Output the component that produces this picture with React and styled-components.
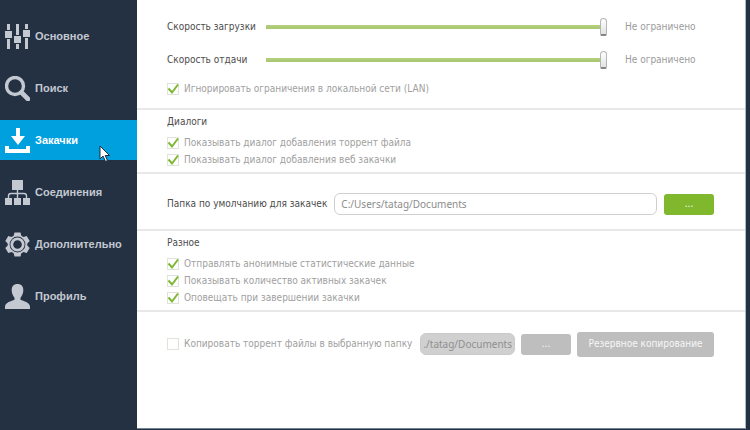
import React, { useState } from "react";
import styled, { createGlobalStyle } from "styled-components";

const GlobalStyle = createGlobalStyle`
  *, *::before, *::after { box-sizing: border-box; }
  body {
    margin: 0;
    background: #243142;
    font-family: "DejaVu Sans Condensed", "Noto Sans", sans-serif;
    font-size: 10px;
    line-height: 16px;
  }
  button, input { font: inherit; margin: 0; }
`;

const Window = styled.div`
  position: relative;
  display: flex;
  min-height: 100vh;
  padding: 0 4px 1px 0;
`;

const Sidebar = styled.nav`
  flex: 0 0 137px;
  display: flex;
  flex-direction: column;
  gap: 12px;
  padding-top: 16px;
`;

const NavItem = styled.a`
  display: flex;
  align-items: center;
  gap: 5px;
  height: 40px;
  padding-left: 5px;
  font-family: "Liberation Sans", sans-serif;
  font-size: 11px;
  font-weight: 700;
  text-decoration: none;
  color: ${(p) => (p.$active ? "#ffffff" : "#c3c8d1")};
  background: ${(p) => (p.$active ? "#009fde" : "transparent")};

  svg { flex: none; fill: currentColor; }
`;

const Main = styled.main`
  flex: 1;
  min-width: 0;
  background: #ffffff;
  border-right: 1px solid #a9bccb;
  border-bottom: 1px solid #6f8494;
`;

const Section = styled.section`
  padding: ${(p) => p.$pad} 31px ${(p) => p.$padEnd} 30px;
  color: #4c4c4c;

  & + & { border-top: 2px solid #e8e8e9; }
`;

const SectionTitle = styled.h2`
  margin: 0 0 4px;
  font-size: inherit;
  font-weight: 400;
`;

const SpeedRows = styled.div`
  margin-bottom: 4px;
`;

const SliderRow = styled.div`
  display: grid;
  grid-template-columns: 99px 1fr 107px;
  align-items: center;
  height: 33px;
`;

const Slider = styled.input`
  appearance: none;
  width: 100%;
  height: 20px;
  background: linear-gradient(#b4d07f, #a9c76f) center / 100% 4px no-repeat;

  &::-webkit-slider-thumb {
    appearance: none;
    width: 7px;
    height: 18px;
    border: 1px solid #b5b5b5;
    border-bottom: 2px solid #858585;
    border-radius: 4px 4px 2px 2px;
    background: linear-gradient(#ffffff, #e2e2e2);
  }
`;

const SliderValue = styled.output`
  padding-left: 18px;
  color: #9b9b9b;
  white-space: nowrap;
`;

const CheckLabel = styled.label`
  display: flex;
  align-items: center;
  gap: 5px;
  height: 17px;
  color: #a0a0a0;
  white-space: nowrap;
`;

const CheckMark = styled.span`
  display: grid;
  flex: none;

  input, svg { grid-area: 1 / 1; }
  input {
    appearance: none;
    width: 12px;
    height: 12px;
    border: 1px solid #dfe3d8;
    background: #ffffff;
  }
  svg { pointer-events: none; visibility: hidden; }
  input:checked + svg { visibility: visible; }
`;

const FieldRow = styled.div`
  display: flex;
  align-items: center;
  gap: ${(p) => (p.$tight ? "6px" : "7px")};
  height: 26px;
`;

const FieldLabel = styled.label`
  white-space: nowrap;
`;

const PathInput = styled.input`
  flex: ${(p) => (p.$compact ? "0 0 95px" : "0 1 324px")};
  min-width: 0;
  height: 22px;
  margin-left: auto;
  padding: 0 ${(p) => (p.$compact ? "2px" : "6px")};
  border: 1px solid #cfcfcf;
  border-radius: 6px;
  background: #ffffff;
  color: #8c8c8c;
  font-family: "Noto Sans", sans-serif;
  text-align: ${(p) => (p.$compact ? "right" : "left")};

  &:disabled { background: #d0d0d0; color: #8f8f8f; border-color: #cacaca; }
`;

const Button = styled.button`
  flex: 0 0 ${(p) => (p.$wide ? "137px" : "50px")};
  height: ${(p) => (p.$wide ? "25px" : "21px")};
  padding: 0;
  border: 0;
  border-radius: 3px;
  background: #7fb82c;
  color: #ffffff;
  white-space: nowrap;

  &:disabled { background: #bebebe; color: #f6f6f6; }
`;

const Pointer = styled.svg`
  position: absolute;
  left: 99px;
  top: 145px;
  pointer-events: none;
`;

const icons = {
  mixer: (
    <>
      <path d="M2 0h3v6H2zM2 15h3v10H2zM11 0h3v11h-3zM11 20h3v5h-3zM20 0h3v5h-3zM20 14h3v11h-3z" />
      <path d="M0 7h7v7H0zM9 12h7v7H9zM18 6h7v7h-7z" />
    </>
  ),
  search: (
    <g fill="none" stroke="currentColor">
      <circle cx="10" cy="10" r="8.500" strokeWidth="3.400" />
      <path d="M16.500 16.500 23 23" strokeWidth="4.600" strokeLinecap="round" />
    </g>
  ),
  download: (
    <path d="M11 0h4v8h5l-7 9-7-9h5zM0 18h4v3h17v-3h4v7H0z" />
  ),
  network: (
    <>
      <path d="M7 0h11v10H7zM0 18h7v7H0zM9 18h7v7H9zM18 18h7v7h-7z" />
      <path d="M12.500 10v8M3.500 18v-2q0-2.500 2.500-2.500h13q2.500 0 2.500 2.500v2" fill="none" stroke="currentColor" strokeWidth="1.400" />
    </>
  ),
  gear: (
    <>
      <path fillRule="evenodd" d="M9.500.5h6l.8 3.200 2.200 1.200 3.200-1 3 5.200-2.400 2.300v2.200l2.400 2.300-3 5.200-3.200-1-2.200 1.200-.8 3.200h-6l-.8-3.200-2.200-1.200-3.200 1-3-5.200 2.400-2.300v-2.200L.3 9.100l3-5.200 3.200 1 2.200-1.200zM12.500 4.600a7.900 7.900 0 1 0 0 15.800 7.900 7.900 0 0 0 0-15.800z" />
      <path fillRule="evenodd" d="M12.500 5.400a7.100 7.100 0 1 0 0 14.200 7.100 7.100 0 0 0 0-14.200zm0 2.800a4.300 4.300 0 1 1 0 8.600 4.300 4.300 0 0 1 0-8.600z" />
    </>
  ),
  person: (
    <path d="M12.500 0c4 0 6 2.500 5.800 6.500-.1 3-1.300 5.600-2.800 7.200v2c3 1.600 9.500 2.400 9.500 7V25H0v-2.300c0-4.600 6.500-5.400 9.500-7v-2C8 12.100 6.800 9.500 6.700 6.500 6.500 2.500 8.500 0 12.500 0z" />
  ),
};

const navItems = [
  ["mixer", "Основное"],
  ["search", "Поиск"],
  ["download", "Закачки"],
  ["network", "Соединения"],
  ["gear", "Дополнительно"],
  ["person", "Профиль"],
];

function Check({ label, checked = false }) {
  const [on, setOn] = useState(checked);
  return (
    <CheckLabel>
      <CheckMark>
        <input type="checkbox" checked={on} onChange={() => setOn(!on)} />
        <svg width="12" height="12" viewBox="0 0 12 12" fill="none" stroke="#7cb832" strokeWidth="2">
          <path d="M1.500 5.500 5 9.500 11 1.500" />
        </svg>
      </CheckMark>
      {label}
    </CheckLabel>
  );
}

function SpeedRow({ id, label }) {
  return (
    <SliderRow>
      <label htmlFor={id}>{label}</label>
      <Slider id={id} type="range" min="0" max="100" defaultValue="100" />
      <SliderValue htmlFor={id}>Не ограничено</SliderValue>
    </SliderRow>
  );
}

export default function App() {
  return (
    <>
      <GlobalStyle />
      <Window>
        <Sidebar>
          {navItems.map(([icon, label]) => (
            <NavItem key={icon} href={`#${icon}`} $active={icon === "download"}>
              <svg width="25" height="25" viewBox="0 0 25 25" aria-hidden="true">
                {icons[icon]}
              </svg>
              {label}
            </NavItem>
          ))}
        </Sidebar>
        <Main>
          <Section $pad="10px" $padEnd="11px">
            <SpeedRows>
              <SpeedRow id="down" label="Скорость загрузки" />
              <SpeedRow id="up" label="Скорость отдачи" />
            </SpeedRows>
            <Check label="Игнорировать ограничения в локальной сети (LAN)" checked />
          </Section>
          <Section $pad="4px" $padEnd="4px">
            <SectionTitle>Диалоги</SectionTitle>
            <Check label="Показывать диалог добавления торрент файла" checked />
            <Check label="Показывать диалог добавления веб закачки" checked />
          </Section>
          <Section $pad="17px" $padEnd="12px">
            <FieldRow>
              <FieldLabel htmlFor="folder">Папка по умолчанию для закачек</FieldLabel>
              <PathInput id="folder" defaultValue="C:/Users/tatag/Documents" />
              <Button type="button" aria-label="Выбрать папку">...</Button>
            </FieldRow>
          </Section>
          <Section $pad="4px" $padEnd="4px">
            <SectionTitle>Разное</SectionTitle>
            <Check label="Отправлять анонимные статистические данные" checked />
            <Check label="Показывать количество активных закачек" checked />
            <Check label="Оповещать при завершении закачки" checked />
          </Section>
          <Section $pad="19px" $padEnd="19px">
            <FieldRow $tight>
              <Check label="Копировать торрент файлы в выбранную папку" />
              <PathInput $compact disabled aria-label="Папка" value="./tatag/Documents" />
              <Button type="button" disabled>...</Button>
              <Button type="button" $wide disabled>Резервное копирование</Button>
            </FieldRow>
          </Section>
        </Main>
        <Pointer width="12" height="18" viewBox="0 0 12 18" fill="#fff" stroke="#1d2b3a" aria-hidden="true">
          <path d="M1 1v13l3-3 2.500 5.500 2-1L6.200 10.500H10.500z" />
        </Pointer>
      </Window>
    </>
  );
}
